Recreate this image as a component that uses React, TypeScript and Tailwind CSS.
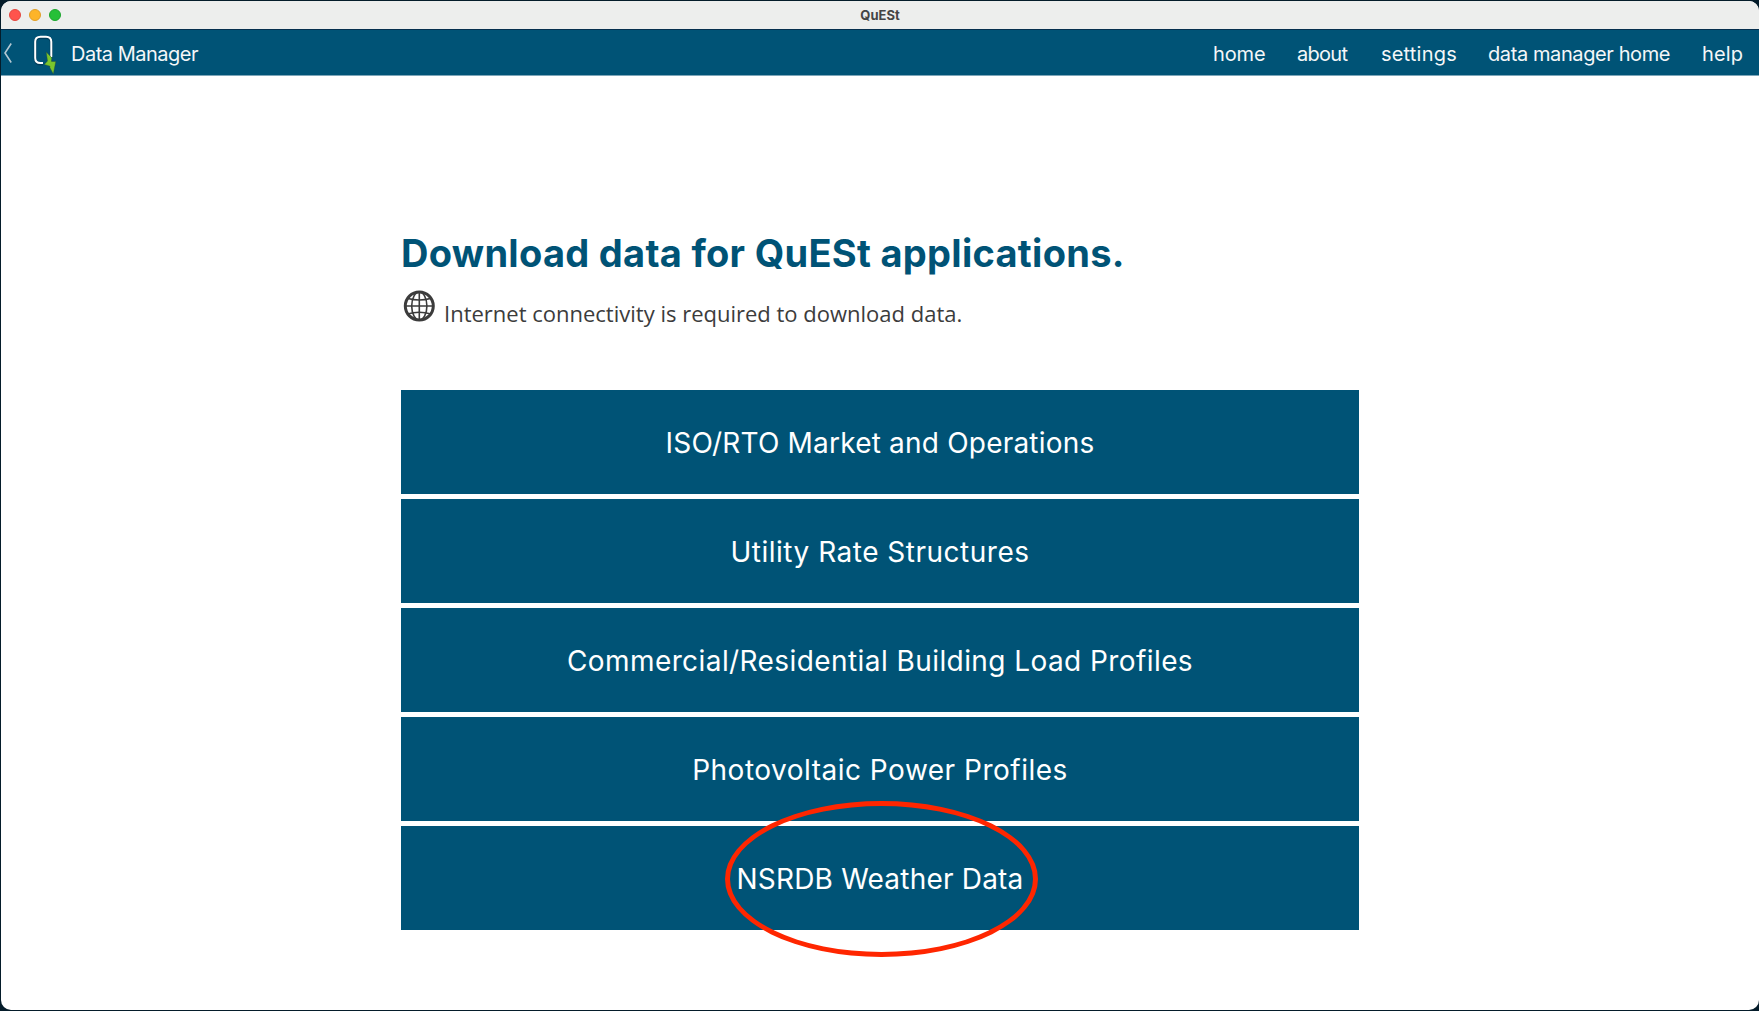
const navItems = [
  { label: "home", className: "w-[51px] tracking-[-0.1px]" },
  { label: "about", className: "w-[51px] tracking-[-0.7px]" },
  { label: "settings", className: "w-[74px] tracking-[0.2px]" },
  { label: "data manager home", className: "w-[181px] tracking-[-0.4px]" },
  { label: "help", className: "w-[40px] tracking-[0.1px]" },
];

const sources = [
  { label: "ISO/RTO Market and Operations", tracking: "tracking-[0.2px]" },
  { label: "Utility Rate Structures", tracking: "tracking-[0.5px]" },
  { label: "Commercial/Residential Building Load Profiles", tracking: "tracking-[0.42px]" },
  { label: "Photovoltaic Power Profiles", tracking: "tracking-[0.5px]" },
  { label: "NSRDB Weather Data", tracking: "tracking-[0.2px]", highlighted: true },
];

function TitleBar() {
  return (
    <div className="grid h-7 shrink-0 grid-cols-3 items-center bg-[#edeeed]">
      <div className="flex gap-2 pl-2">
        <span className="size-3 rounded-full border border-[#e2463f] bg-[#ff544d]" />
        <span className="size-3 rounded-full border border-[#e09e27] bg-[#fdb429]" />
        <span className="size-3 rounded-full border border-[#1ba52d] bg-[#26c038]" />
      </div>
      <span className="text-center text-[13px] leading-none font-bold text-[#454545]">QuESt</span>
    </div>
  );
}

function Logo() {
  return (
    <svg className="ml-[21px] h-[42px] w-6" viewBox="0 -1 24 42" fill="none">
      <path
        d="M10 31H7.500Q2.200 31 2.200 25.500V9.500Q2.200 4.500 7.500 4.500H13Q18.300 4.500 18.300 9.500V24"
        stroke="#001f35"
        strokeOpacity="0.4"
        strokeWidth="3"
      />
      <path
        d="M10 30H7.500Q2.200 30 2.200 25V8.700Q2.200 3.700 7.500 3.700H13Q18.300 3.700 18.300 8.700V24"
        stroke="#fff"
        strokeWidth="2"
      />
      <path
        d="M13.200 19L18.800 24.800L18.400 28.400L22.800 28.600L20.300 41L16.800 34.400L17 33.200L11.300 31.400L14.500 28Z"
        fill="#7ac52d"
        stroke="#294c35"
        strokeWidth="0.400"
      />
    </svg>
  );
}

function AppBar() {
  return (
    <header className="flex h-[47px] shrink-0 items-center border-t border-b border-t-[#062f4e] border-b-[#7da6b9] bg-[#005376] pr-[17px] text-[20px] leading-6 text-[#f4f7f9]">
      <svg className="ml-[3px] h-5 w-2" viewBox="0 0 8 20" fill="none">
        <path d="M7.200 0.500L1 10L7.200 19.500" stroke="#b4c8d2" strokeWidth="1.600" />
      </svg>
      <Logo />
      <span className="mt-0.5 ml-[14px] tracking-[-0.5px]">Data Manager</span>
      <nav className="mt-0.5 ml-auto flex gap-[33px]">
        {navItems.map((item) => (
          <a key={item.label} className={`whitespace-nowrap ${item.className}`}>
            {item.label}
          </a>
        ))}
      </nav>
    </header>
  );
}

function GlobeIcon() {
  return (
    <svg className="size-8" viewBox="0 0 32 32" fill="none" stroke="#3c3c3c">
      <circle cx="16.300" cy="16" r="14" strokeWidth="3" />
      <ellipse cx="16.300" cy="16" rx="7.600" ry="14" strokeWidth="1.600" />
      <path d="M16.300 2V30M2.300 16H30.300" strokeWidth="1.600" />
      <path d="M5 8.500Q16.300 11.500 27.500 8.500M4.500 24Q16.300 20.500 28 24" strokeWidth="1.700" />
    </svg>
  );
}

export default function App() {
  return (
    <div className="h-[1011px] w-full bg-[#041c2a] pt-px pb-px pl-px font-['Inter',sans-serif]">
      <div className="flex h-full flex-col overflow-hidden rounded-[10px] bg-white">
        <TitleBar />
        <AppBar />
        <main className="mx-auto w-[958px] pt-[153px]">
          <h1 className="text-[38px] leading-[48px] font-bold tracking-[0.29px] whitespace-nowrap text-[#005376]">
            Download data for QuESt applications.
          </h1>
          <div className="mt-[13px] flex h-10 items-start pl-[2px]">
            <GlobeIcon />
            <p className="mt-2 ml-[9px] font-['Open_Sans',sans-serif] text-[22px] leading-[30px] text-[#3c3c3c]">
              Internet connectivity is required to download data.
            </p>
          </div>
          <div className="mt-[60px] flex flex-col gap-[5px]">
            {sources.map((source) => (
              <button
                key={source.label}
                className={`relative flex h-[104px] w-full items-center justify-center bg-[#005376] pt-0.5 text-[28px] text-white ${source.tracking}`}
              >
                {source.label}
                {source.highlighted && (
                  <span className="absolute -top-[25px] left-[324px] h-[156px] w-[313px] rounded-[50%] border-[5px] border-[#ff2600]" />
                )}
              </button>
            ))}
          </div>
        </main>
      </div>
    </div>
  );
}
